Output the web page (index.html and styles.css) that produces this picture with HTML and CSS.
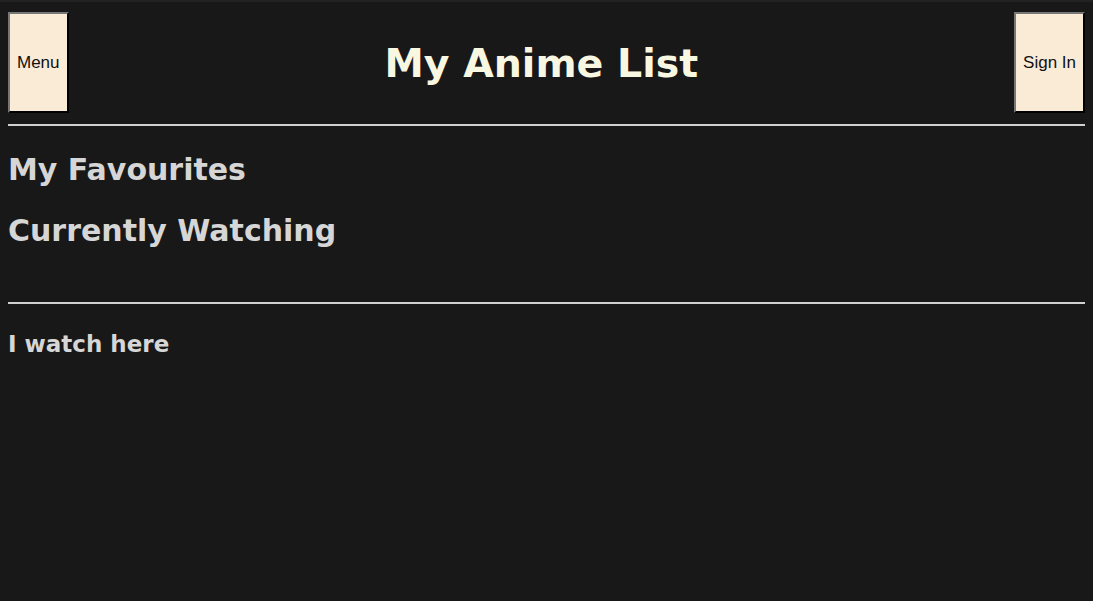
FILE: index.html
```html
<!DOCTYPE html>
<html>
<head>
<meta charset="utf-8">
<link rel="stylesheet" href="styles.css">
</head>
<body>
<header class="top">
  <button class="btn">Menu</button>
  <h1 class="title">My Anime List</h1>
  <button class="btn">Sign In</button>
</header>
<hr class="rule">
<main class="lists">
  <h2 class="section">My Favourites</h2>
  <h2 class="section">Currently Watching</h2>
</main>
<hr class="rule rule-bottom">
<footer class="foot">
  <h3 class="foot-title">I watch here</h3>
</footer>
</body>
</html>
```
FILE: styles.css
```css
html {
  background: #181818;
  border-top: 2px solid #222;
}
body {
  margin: 0 8px;
  padding-top: 10px;
  background: #181818;
  font-family: "DejaVu Sans", Verdana, sans-serif;
  color: #d6d6d6;
}
.top {
  display: flex;
  align-items: center;
  height: 101px;
}
.btn {
  height: 101px;
  padding: 0 7px;
  background: #faebd7;
  border: 2px outset #777;
  border-right-color: #000;
  border-bottom-color: #000;
  font-family: "Liberation Sans", Arial, sans-serif;
  font-size: 17px;
  color: #111;
}
.title {
  flex: 1;
  margin: 0;
  text-align: center;
  font-size: 39.5px;
  font-weight: bold;
  color: #f8f7e1;
}
.rule {
  margin: 11px 0 0;
  border: 0;
  height: 2px;
  background: #d0d0d0;
}
.lists {
  padding-top: 23px;
}
.section {
  margin: 0 0 20px;
  font-size: 30px;
  line-height: 41px;
}
.rule-bottom {
  margin-top: 51px;
}
.foot-title {
  margin: 27px 0 0;
  font-size: 23px;
}
```
